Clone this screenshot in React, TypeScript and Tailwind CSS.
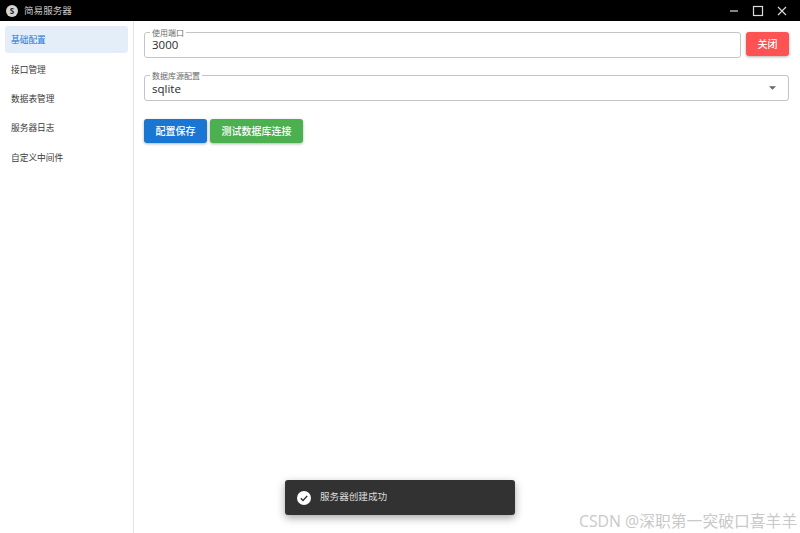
import React from "react";

const cjk = { fontFamily: '"Open Sans","Noto Sans CJK SC",sans-serif' };
const items = ["基础配置", "接口管理", "数据表管理", "服务器日志", "自定义中间件"];

function Legend({ children }: { children: React.ReactNode }) {
  return (
    <span className="absolute left-[5px] top-[-5px] bg-white px-[2px] text-[8px] leading-[10px] text-[#6b6b6b]">
      {children}
    </span>
  );
}

export default function App() {
  return (
    <div className="relative flex h-[533px] w-[800px] flex-col overflow-hidden bg-white" style={cjk}>
      <header className="flex h-[21px] shrink-0 items-center bg-black pl-[6px] text-white">
        <span className="flex h-[12px] w-[12px] items-center justify-center rounded-full bg-[#d5d5d5] text-[8px] font-bold leading-none text-[#222]">S</span>
        <span className="ml-[6px] text-[9.6px] leading-none text-[#c8c8c8]">简易服务器</span>
        <div className="ml-auto flex items-center">
          <svg width="10" height="10" viewBox="0 0 10 10" className="mr-[13px]"><path d="M1 5h8" stroke="#ddd" strokeWidth="1.2" /></svg>
          <svg width="12" height="12" viewBox="0 0 12 12" className="mr-[13px]"><rect x="1.5" y="1.5" width="9" height="9" fill="none" stroke="#ddd" strokeWidth="1.2" /></svg>
          <svg width="10" height="10" viewBox="0 0 10 10" className="mr-[13px]"><path d="M1 1l8 8M9 1l-8 8" stroke="#ddd" strokeWidth="1.1" /></svg>
        </div>
      </header>
      <div className="flex min-h-0 flex-1">
        <aside className="flex w-[134px] shrink-0 flex-col border-r border-[#e3e3e3] px-[5px] pt-[5px]">
          {items.map((t, i) => (
            <div
              key={t}
              className={`flex h-[27px] items-center rounded-[3px] pl-[6px] text-[8.7px] leading-none ${i < 4 ? "mb-[2.4px]" : ""} ${i === 0 ? "bg-[#e3eef9] text-[#1f76d2]" : "text-[#3a3a3a]"}`}
            >
              <span className="pt-[2px]">{t}</span>
            </div>
          ))}
        </aside>
        <main className="flex flex-1 flex-col pl-[10px] pr-[11px] pt-[11px]">
          <div className="flex items-start gap-[5px]">
            <div className="relative flex h-[26px] flex-1 items-center rounded-[3px] border border-[#c4c4c4] pl-[7px] text-[11.5px] text-[#2b2b2b]">
              <Legend>使用端口</Legend>
              <span className="pb-[1px]">3000</span>
            </div>
            <button className="h-[24px] w-[43px] rounded-[3px] bg-[#ff5252] text-[10px] font-medium text-white shadow-[0_1px_3px_rgba(0,0,0,0.3)]">关闭</button>
          </div>
          <div className="relative mt-[17px] flex h-[26px] items-center rounded-[3px] border border-[#c4c4c4] pl-[7px] pr-[12px] text-[11.5px] text-[#2b2b2b]">
            <Legend>数据库源配置</Legend>
            <span className="pt-[1px]">sqlite</span>
            <svg width="7" height="4" viewBox="0 0 8 4" className="ml-auto"><path d="M0 0h8L4 4z" fill="#666" /></svg>
          </div>
          <div className="mt-[18px] flex gap-[3px]">
            <button className="h-[24px] w-[63px] rounded-[3px] bg-[#1976d2] text-[10px] font-medium text-white shadow-[0_1px_3px_rgba(0,0,0,0.3)]">配置保存</button>
            <button className="h-[24px] w-[93px] rounded-[3px] bg-[#4caf50] text-[10px] font-medium text-white shadow-[0_1px_3px_rgba(0,0,0,0.3)]">测试数据库连接</button>
          </div>
        </main>
      </div>
      <div className="absolute left-[285px] top-[480px] flex h-[35px] w-[230px] items-center rounded-[3px] bg-[#323232] pl-[12px] shadow-[0_3px_8px_rgba(0,0,0,0.35)]">
        <svg width="14" height="14" viewBox="0 0 14 14"><circle cx="7" cy="7" r="7" fill="#fff" /><path d="M3.8 7.2l2.2 2.2 4.2-4.4" fill="none" stroke="#323232" strokeWidth="1.4" /></svg>
        <span className="ml-[9px] pb-[1px] text-[9.6px] leading-none text-[#dcdcdc]">服务器创建成功</span>
      </div>
      <div className="absolute left-[579px] top-[511px] whitespace-nowrap text-[15.8px] leading-[20px] text-[#c9c9c9]">CSDN @深职第一突破口喜羊羊</div>
    </div>
  );
}
